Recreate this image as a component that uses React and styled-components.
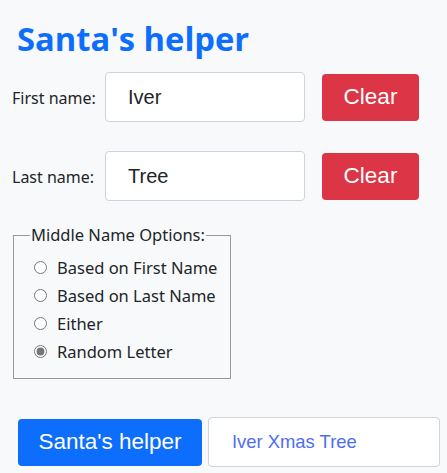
import React from 'react';
import styled, { createGlobalStyle } from 'styled-components';

const GlobalStyle = createGlobalStyle`
  html, body {
    margin: 0;
    padding: 0;
    background-color: #f8f9fa;
  }
  body {
    font-family: "Noto Sans", "Open Sans", sans-serif;
    color: #212529;
  }
`;

const Page = styled.div`
  display: flex;
  flex-direction: column;
  align-items: flex-start;
  width: 447px;
  height: 473px;
  padding: 20px 0 0 12px;
  box-sizing: border-box;
  overflow: hidden;
`;

const Title = styled.h1`
  margin: 0 0 14px 5px;
  font-family: "Open Sans", "Noto Sans", sans-serif;
  font-weight: 700;
  font-size: 32.7px;
  line-height: 38px;
  color: #0d6efd;
`;

const NameRows = styled.div`
  display: flex;
  flex-direction: column;
  gap: 29px;
`;

const NameRow = styled.div`
  display: grid;
  grid-template-columns: 93px 200px 97px;
  align-items: center;
  height: 50px;
`;

const Label = styled.label`
  font-size: 16px;
  color: #212529;
  padding-top: 2px;
`;

const TextInput = styled.input`
  width: 200px;
  height: 50px;
  box-sizing: border-box;
  border: 1px solid #ced4da;
  border-radius: 4px;
  background: #fff;
  padding: 0 22px;
  font-family: "Liberation Sans", Arial, sans-serif;
  font-size: 20px;
  color: #212529;
  outline: none;
`;

const Button = styled.button`
  height: 47px;
  border: none;
  border-radius: 4px;
  background-color: ${p => p.$variant === 'danger' ? '#dc3545' : '#0d6efd'};
  color: #fff;
  font-family: "Liberation Sans", Arial, sans-serif;
  font-size: 22.5px;
  cursor: pointer;
  padding: 0;
  width: ${p => p.$width}px;
  margin-left: ${p => p.$offset || 0}px;
`;

const Fieldset = styled.fieldset`
  width: 218px;
  box-sizing: border-box;
  margin: 23px 0 0 1px;
  padding: 7px 0 13px 20px;
  border: 1px solid #999;
`;

const Legend = styled.legend`
  padding: 0 1px;
  margin-left: -4px;
  font-size: 16.5px;
  line-height: 22px;
`;

const Option = styled.label`
  display: flex;
  align-items: center;
  height: 28px;
  font-size: 16.5px;
  gap: 10px;

  input {
    margin: 0;
    width: 13px;
    height: 13px;
    accent-color: #767676;
  }
`;

const Footer = styled.div`
  display: flex;
  align-items: center;
  gap: 6px;
  margin: 38px 0 0 6px;
`;

const Output = styled.div`
  width: 232px;
  height: 50px;
  box-sizing: border-box;
  border: 1px solid #ced4da;
  border-radius: 4px;
  background: #fff;
  display: flex;
  align-items: center;
  padding-left: 23px;
  font-family: "Liberation Sans", Arial, sans-serif;
  font-size: 18.4px;
  color: #4d6ef5;
`;

const options = [
  'Based on First Name',
  'Based on Last Name',
  'Either',
  'Random Letter',
];

export default function App() {
  const [first, setFirst] = React.useState('Iver');
  const [last, setLast] = React.useState('Tree');
  const [choice, setChoice] = React.useState('Random Letter');

  return (
    <Page>
      <GlobalStyle />
      <Title>Santa's helper</Title>
      <NameRows>
        <NameRow>
          <Label>First name:</Label>
          <TextInput value={first} onChange={e => setFirst(e.target.value)} />
          <Button $variant="danger" $width={97} $offset={17} onClick={() => setFirst('')}>Clear</Button>
        </NameRow>
        <NameRow>
          <Label>Last name:</Label>
          <TextInput value={last} onChange={e => setLast(e.target.value)} />
          <Button $variant="danger" $width={97} $offset={17} onClick={() => setLast('')}>Clear</Button>
        </NameRow>
      </NameRows>
      <Fieldset>
        <Legend>Middle Name Options:</Legend>
        {options.map(o => (
          <Option key={o}>
            <input type="radio" name="middle" checked={choice === o} onChange={() => setChoice(o)} />
            {o}
          </Option>
        ))}
      </Fieldset>
      <Footer>
        <Button $width={184}>Santa's helper</Button>
        <Output>{first} Xmas {last}</Output>
      </Footer>
    </Page>
  );
}
